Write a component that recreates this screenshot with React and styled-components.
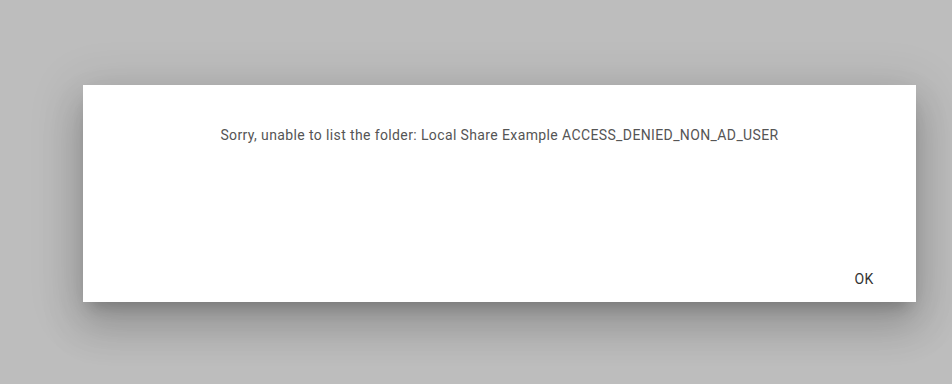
import React from 'react'
import styled, { createGlobalStyle } from 'styled-components'

const GlobalStyle = createGlobalStyle`
  html, body {
    margin: 0;
    padding: 0;
    height: 100%;
    background: #bdbdbd;
    font-family: Roboto, "Liberation Sans", Arial, sans-serif;
  }
`

const Backdrop = styled.div`
  width: 952px;
  height: 384px;
  box-sizing: border-box;
  padding: 85px 0 0 83px;
  background: #bdbdbd;
`

const Dialog = styled.div`
  width: 833px;
  height: 217px;
  background: #fff;
  display: flex;
  flex-direction: column;
  box-shadow: 0 11px 15px -7px rgba(0, 0, 0, 0.2),
    0 24px 38px 3px rgba(0, 0, 0, 0.14), 0 9px 46px 8px rgba(0, 0, 0, 0.12);
`

const Message = styled.div`
  flex: 1;
  padding-top: 40px;
  text-align: center;
  font-size: 14px;
  letter-spacing: 0.38px;
  line-height: 20px;
  color: #555;
`

const Actions = styled.div`
  display: flex;
  justify-content: flex-end;
  padding: 0 20px 5px;
`

const Button = styled.button`
  min-width: 64px;
  height: 36px;
  border: 0;
  background: transparent;
  font-family: inherit;
  font-size: 14px;
  letter-spacing: 0.3px;
  color: #333;
  text-transform: uppercase;
  cursor: pointer;
`

export default function App() {
  return (
    <>
      <GlobalStyle />
      <Backdrop>
        <Dialog>
          <Message>
            Sorry, unable to list the folder: Local Share Example
            ACCESS_DENIED_NON_AD_USER
          </Message>
          <Actions>
            <Button>OK</Button>
          </Actions>
        </Dialog>
      </Backdrop>
    </>
  )
}
